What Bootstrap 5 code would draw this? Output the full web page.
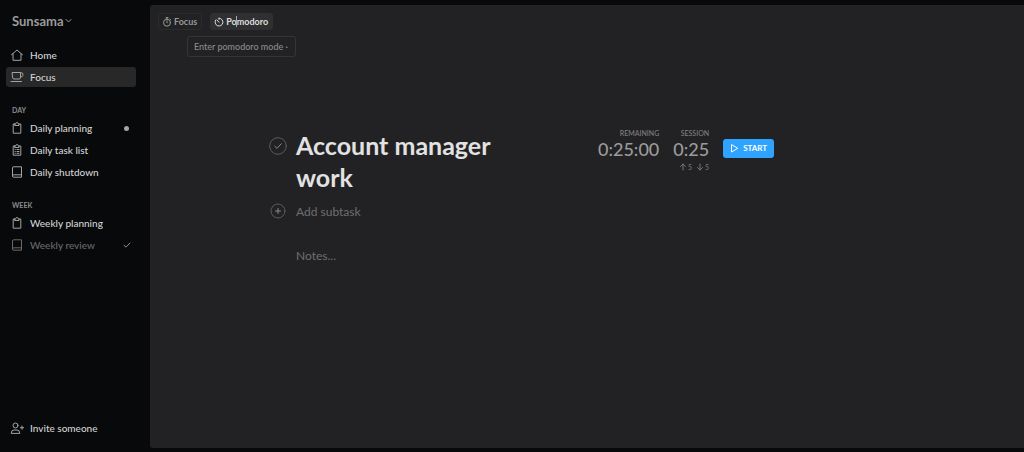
<!DOCTYPE html>
<html lang="en">
<head>
<meta charset="utf-8">
<meta name="viewport" content="width=device-width, initial-scale=1">
<title>Sunsama</title>
<link href="https://cdn.jsdelivr.net/npm/bootstrap@5.3.0/dist/css/bootstrap.min.css" rel="stylesheet">
<style>
  body { background: #07090b; color: #c6c6c6; font: 500 10px/20px Lato, "Liberation Sans", sans-serif; }
  svg { fill: none; stroke: currentColor; stroke-width: 1; stroke-linecap: round; stroke-linejoin: round; flex: none; }
  a { color: inherit; text-decoration: none; }
  button { font: inherit; color: inherit; }
  .sidebar { width: 150px; padding: 11px 14px 14px 6px; }
  .brand { gap: 2px; padding: 0 6px; font-size: 13px; line-height: 20px; font-weight: 700; color: #9b9b9b; }
  .menu { gap: 2px; }
  .menu-top { margin-top: 14px; }
  .menu a, .invite { display: flex; align-items: center; gap: 6px; height: 20px; padding: 0 5px 0 4px; border-radius: 3px; color: #d4d4d4; }
  .menu svg, .invite svg { color: #a3a3a3; }
  .menu a.active { background: #282828; }
  .menu a.done, .menu a.done svg { color: #6a6a6a; }
  .menu a.done svg:last-child { color: #8f8f8f; }
  .section-title { margin: 15px 0 0; padding: 0 6px; font-size: 7px; line-height: 16px; font-weight: 700; color: #8d8d8d; }
  .dot { width: 5px; height: 5px; margin-right: 2px; background: #a5a5a5; }
  .page { padding: 5px 0 4px; }
  .panel { background: #222224; border-radius: 3px 0 0 3px; padding: 8px 8px 0; }
  .mode { height: 17px; padding: 0 4px 0 3px; gap: 2px; border: 1px solid #2b2b2d; border-radius: 3px; background: none; font-size: 9px; line-height: 15px; font-weight: 700; color: #999; }
  .mode.active { background: #303032; border-color: #303032; color: #dedede; }
  .hint { top: 23px; left: 29px; width: 109px; height: 21px; padding: 0 6px; border: 1px solid #353537; border-radius: 3px; font-size: 9px; line-height: 19px; color: #8b8b8b; white-space: nowrap; }
  .caret { top: 2px; left: 25px; width: 1px; height: 11px; background: #aaa; }
  .task { width: 100%; max-width: 636px; margin: 99px auto 0; }
  .task-row { display: grid; grid-template-columns: 18px 1fr; column-gap: 9px; }
  .subtask { margin-top: 9px; }
  .round { width: 18px; height: 18px; padding: 0; border: 0; background: none; color: #8a8a8a; display: flex; justify-content: center; align-items: center; }
  .round circle { stroke: #5c5c5e; }
  h1 { margin: 0; font-size: 25px; line-height: 32px; font-weight: 700; color: #e2e2e2; }
  .field { width: 100%; height: 20px; padding: 0; border: 0; background: none; outline: 0; resize: none; overflow: hidden; font-size: 12px; line-height: 20px; color: #ccc; }
  .field::placeholder { color: #6f6f6f; opacity: 1; }
  .timers { margin-left: 64px; gap: 14px; }
  .timer { text-align: right; color: #9b9b9b; }
  .timer-label { font-size: 7px; line-height: 8px; color: #808080; }
  .timer-value { font-size: 18px; line-height: 25px; }
  .step { padding: 0; border: 0; background: none; font-size: 7px; line-height: 10px; color: #747474; gap: 1px; }
  .start { height: 19px; width: 51px; margin-top: 10px; padding: 0; gap: 4px; border: 0; border-radius: 3px; background: #2ea3ff; color: #fff; font-size: 8px; line-height: 19px; font-weight: 700; }
  .start:hover { background: #1d93f0; color: #fff; }
</style>
</head>
<body>
<svg class="d-none" aria-hidden="true">
  <symbol id="clip" viewBox="0 0 14 14"><path d="M5 3H3.200v9.200h7.600V3H9M5 2.800h1c0-2 2-2 2 0h1v1.700H5z"/></symbol>
  <symbol id="book" viewBox="0 0 14 14"><path d="M2.500 11V3q0-1.200 1.200-1.200h7.800v10.400H3.700Q2.500 12.200 2.500 11q0-1.200 1.200-1.200h7.800"/></symbol>
</svg>
<div class="d-flex min-vh-100">
  <aside class="sidebar d-flex flex-column flex-shrink-0">
    <button class="brand bg-transparent border-0 d-flex align-items-center">Sunsama
      <svg width="7" height="6" viewBox="0 0 7 6"><path d="M1 1.500 3.500 4 6 1.500"/></svg></button>
    <nav class="menu menu-top d-flex flex-column">
      <a href="#"><svg width="14" height="14" viewBox="0 0 14 14"><path d="M1.500 6.800 7 2l5.500 4.800M3 5.700v6.600h8V5.700"/></svg>Home</a>
      <a href="#" class="active" aria-current="page"><svg width="14" height="14" viewBox="0 0 14 14"><path d="M2.500 2.500h8v5q0 1.500-1.500 1.500H4Q2.500 9 2.500 7.500zM10.500 2.800h1.300q1 0 1 1v1.700q0 1.500-2.300 1.500M1 11.500h10.500"/></svg>Focus</a>
    </nav>
    <h2 class="section-title">DAY</h2>
    <nav class="menu d-flex flex-column">
      <a href="#"><svg width="14" height="14"><use href="#clip"/></svg>Daily planning<span class="dot rounded-circle ms-auto"></span></a>
      <a href="#"><svg width="14" height="14" viewBox="0 0 14 14"><use href="#clip"/><path d="M5 6.500h.3M7 6.500h2M5 8.500h.3M7 8.500h2M5 10.300h.3M7 10.300h2"/></svg>Daily task list</a>
      <a href="#"><svg width="14" height="14"><use href="#book"/></svg>Daily shutdown</a>
    </nav>
    <h2 class="section-title">WEEK</h2>
    <nav class="menu d-flex flex-column">
      <a href="#"><svg width="14" height="14"><use href="#clip"/></svg>Weekly planning</a>
      <a href="#" class="done"><svg width="14" height="14"><use href="#book"/></svg>Weekly review<svg class="ms-auto" width="8" height="8" viewBox="0 0 8 8"><path d="M1 4.200 3 6.200 7 2"/></svg></a>
    </nav>
    <a href="#" class="invite mt-auto"><svg width="14" height="14" viewBox="0 0 14 14"><circle cx="5.500" cy="4.500" r="2.500"/><path d="M1.200 12q0-3 2.800-3h3q2.800 0 2.800 3zM12 5v3.400M10.300 6.700h3.400"/></svg>Invite someone</a>
  </aside>
  <div class="page flex-grow-1 d-flex">
    <main class="panel flex-grow-1">
      <div class="d-flex gap-2 position-relative">
        <button class="mode d-flex align-items-center"><svg width="10" height="10" viewBox="0 0 10 10"><circle cx="5" cy="5.700" r="3.500"/><path d="M4 .7h2M5 .7v1.400M5 3.800v2M8 2.200l.6.500"/></svg>Focus</button>
        <button class="mode active d-flex align-items-center position-relative"><svg width="10" height="10" viewBox="0 0 10 10"><path d="M5 1.200a3.900 3.900 0 1 1-3.300 1.800M5 1.200v1.200M3 3l2 2.200"/></svg>Pomodoro<span class="caret position-absolute"></span></button>
        <div class="hint position-absolute overflow-hidden" role="tooltip">Enter pomodoro mode ·</div>
      </div>
      <div class="task">
        <div class="d-flex align-items-start">
          <div class="col-5 task-row">
            <button class="round mt-2" aria-label="Complete task"><svg width="18" height="18" viewBox="0 0 18 18"><circle cx="9" cy="9" r="8.300"/><path d="m5.800 9.200 2.200 2.200 4.200-4.600"/></svg></button>
            <h1>Account manager work</h1>
          </div>
          <div class="timers d-flex align-items-start">
            <div class="timer"><div class="timer-label">REMAINING</div><div class="timer-value">0:25:00</div></div>
            <div class="timer"><div class="timer-label">SESSION</div><div class="timer-value">0:25</div>
              <div class="d-flex justify-content-end gap-1">
                <button class="step d-flex align-items-center" aria-label="Add 5 minutes"><svg width="8" height="8" viewBox="0 0 8 8"><path d="M4 7V1M1.500 3.500 4 1l2.500 2.500"/></svg>5</button>
                <button class="step d-flex align-items-center" aria-label="Remove 5 minutes"><svg width="8" height="8" viewBox="0 0 8 8"><path d="M4 1v6M1.500 4.500 4 7l2.500-2.500"/></svg>5</button>
              </div></div>
            <button class="start btn d-flex align-items-center justify-content-center"><svg width="9" height="9" viewBox="0 0 9 9"><path d="M1.500 1v7l6-3.500z"/></svg>START</button>
          </div>
        </div>
        <div class="task-row subtask">
          <button class="round" aria-label="Add subtask"><svg width="16" height="16" viewBox="0 0 16 16"><circle cx="8" cy="8" r="7"/><path d="M8 5.500v5M5.500 8h5"/></svg></button>
          <input class="field" aria-label="Subtask" placeholder="Add subtask">
        </div>
        <div class="task-row mt-4"><span></span><textarea class="field" rows="1" aria-label="Notes" placeholder="Notes..."></textarea></div>
      </div>
    </main>
  </div>
</div>
<script src="https://cdn.jsdelivr.net/npm/bootstrap@5.3.0/dist/js/bootstrap.bundle.min.js"></script>
</body>
</html>
